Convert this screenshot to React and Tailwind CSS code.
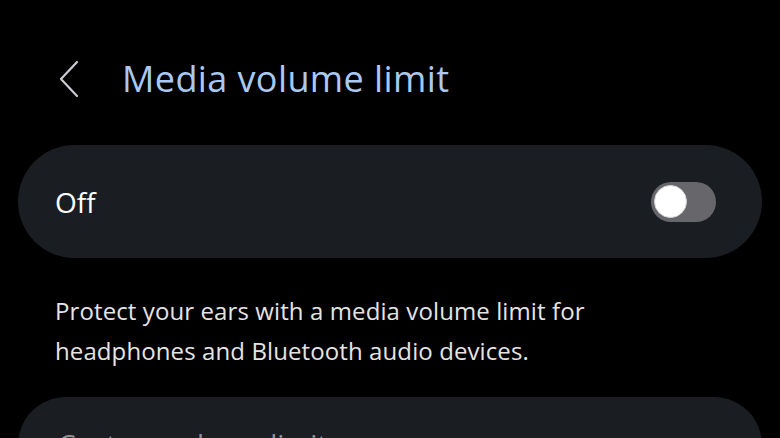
import { useState } from 'react';

export default function App() {
  const [enabled, setEnabled] = useState(false);

  return (
    <div className="w-[780px] h-[438px] overflow-hidden bg-black font-['Open_Sans',sans-serif]">
      {/* header */}
      <div className="h-[160px] flex items-center pb-[2px] box-border">
        <button className="ml-[52px] w-[34px] h-[40px] flex items-center justify-center text-[#c9ccd1]">
          <svg width="22" height="38" viewBox="0 0 22 38" fill="none">
            <path d="M19 2 L3 19 L19 36" stroke="currentColor" strokeWidth="2.2" strokeLinecap="round" strokeLinejoin="round" />
          </svg>
        </button>
        <h1 className="ml-[36px] text-[36px] leading-none text-[#a9c9f2] tracking-[0.4px]">Media volume limit</h1>
      </div>

      <div className="-mt-[15px] px-[18px] flex flex-col">
        {/* master switch */}
        <div className="h-[113px] rounded-[57px] bg-[#1a1d22] flex items-center justify-between pl-[37px] pr-[46px]">
          <span className="text-[28px] text-white">{enabled ? 'On' : 'Off'}</span>
          <button
            onClick={() => setEnabled(!enabled)}
            className="w-[65px] h-[40px] rounded-full bg-[#67676b] flex items-center px-[3px]"
          >
            <span className="w-[33px] h-[33px] rounded-full bg-white border border-[#d8d8d8]" />
          </button>
        </div>

        <p className="mt-[33px] pl-[37px] w-[620px] text-[24px] leading-[40px] text-[#e4e4e4] tracking-[0.1px]">
          Protect your ears with a media volume limit for headphones and Bluetooth audio devices.
        </p>

        {/* limit slider card */}
        <div className="mt-[26px] h-[120px] rounded-[48px] bg-[#1a1d22] pl-[40px] pt-[27px]">
          <span className="text-[28px] leading-[40px] text-[#8e9196]">Custom volume limit</span>
        </div>
      </div>
    </div>
  );
}
